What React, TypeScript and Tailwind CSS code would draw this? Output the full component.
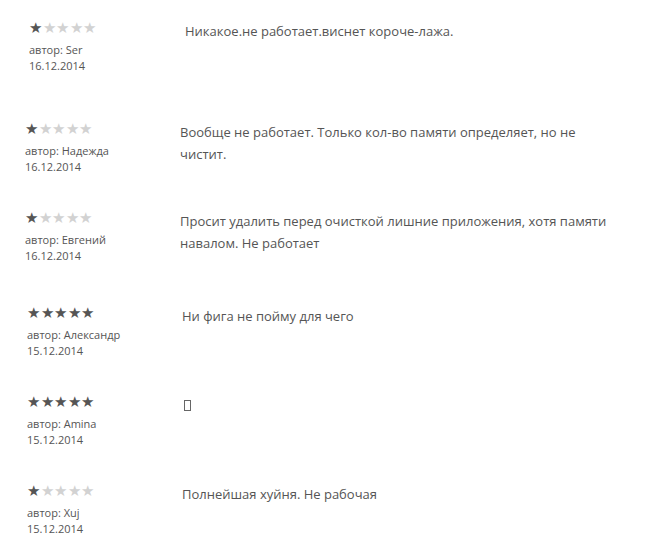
import React from "react";

type Review = {
    rating: number;
    author: string;
    date: string;
    text: string;
    rowClass: string;
    leftClass: string;
};

const reviews: Review[] = [
    {
        rating: 1,
        author: "Ser",
        date: "16.12.2014",
        text: "Никакое.не работает.виснет короче-лажа.",
        rowClass: "mt-[19px]",
        leftClass: "w-[185px] pl-[29px]",
    },
    {
        rating: 1,
        author: "Надежда",
        date: "16.12.2014",
        text: "Вообще не работает. Только кол-во памяти определяет, но не чистит.",
        rowClass: "mt-[46px]",
        leftClass: "w-[180px] pl-[25px]",
    },
    {
        rating: 1,
        author: "Евгений",
        date: "16.12.2014",
        text: "Просит удалить перед очисткой лишние приложения, хотя памяти навалом. Не работает",
        rowClass: "mt-[34px]",
        leftClass: "w-[180px] pl-[25px]",
    },
    {
        rating: 5,
        author: "Александр",
        date: "15.12.2014",
        text: "Ни фига не пойму для чего",
        rowClass: "mt-[40px]",
        leftClass: "w-[182px] pl-[27px]",
    },
    {
        rating: 5,
        author: "Amina",
        date: "15.12.2014",
        text: "",
        rowClass: "mt-[34px]",
        leftClass: "w-[182px] pl-[27px]",
    },
    {
        rating: 1,
        author: "Xuj",
        date: "15.12.2014",
        text: "Полнейшая хуйня. Не рабочая",
        rowClass: "mt-[34px]",
        leftClass: "w-[182px] pl-[27px]",
    },
];

function Stars({ rating }: { rating: number }) {
    return (
        <div className="flex h-[16px] items-center gap-[0.5px] text-[15px] leading-[16px]">
            {[1, 2, 3, 4, 5].map((i) => (
                <span key={i} className={i <= rating ? "text-[#555555]" : "text-[#d2d2d2]"}>
                    ★
                </span>
            ))}
        </div>
    );
}

export default function App() {
    return (
        <div className="h-[553px] w-[649px] overflow-hidden bg-white font-['Open_Sans',sans-serif] text-[#555555]">
            <div className="flex flex-col">
                {reviews.map((r) => (
                    <div key={r.author} className={`flex ${r.rowClass}`}>
                        <div className={`shrink-0 ${r.leftClass}`}>
                            <Stars rating={r.rating} />
                            <div className="mt-[7px] text-[11px] leading-[16px]">автор: {r.author}</div>
                            <div className="text-[11px] leading-[16px]">{r.date}</div>
                        </div>
                        <div className="mt-[1px] w-[440px] text-[13px] leading-[22px]">
                            {r.text || (
                                // unsupported emoji shown as a missing-glyph box
                                <span className="mt-[6px] ml-[2px] inline-block h-[11px] w-[7px] border border-[#666666]" />
                            )}
                        </div>
                    </div>
                ))}
            </div>
        </div>
    );
}
